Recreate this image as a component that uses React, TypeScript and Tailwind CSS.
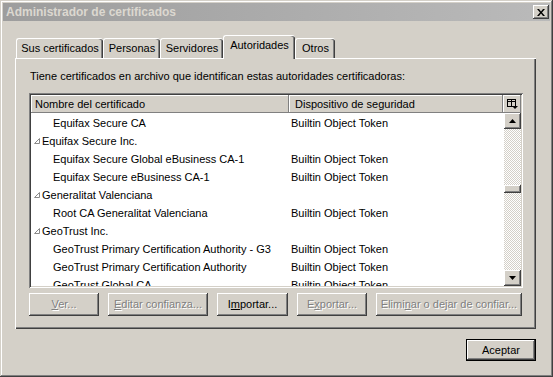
import React from 'react'

const FONT = "font-['Liberation_Sans',Arial,sans-serif]"

const RAISED =
  'shadow-[inset_-1px_-1px_#404040,inset_1px_1px_#ffffff,inset_-2px_-2px_#808080,inset_2px_2px_#d4d0c8]'
const SUNKEN =
  'shadow-[inset_1px_1px_#808080,inset_-1px_-1px_#ffffff,inset_2px_2px_#404040,inset_-2px_-2px_#d4d0c8]'
const THIN_RAISED = 'shadow-[inset_-1px_-1px_#808080,inset_1px_1px_#ffffff]'

type Row = { name: string; device?: string; group?: boolean }

const ROWS: Row[] = [
  { name: 'Equifax Secure CA', device: 'Builtin Object Token' },
  { name: 'Equifax Secure Inc.', group: true },
  { name: 'Equifax Secure Global eBusiness CA-1', device: 'Builtin Object Token' },
  { name: 'Equifax Secure eBusiness CA-1', device: 'Builtin Object Token' },
  { name: 'Generalitat Valenciana', group: true },
  { name: 'Root CA Generalitat Valenciana', device: 'Builtin Object Token' },
  { name: 'GeoTrust Inc.', group: true },
  { name: 'GeoTrust Primary Certification Authority - G3', device: 'Builtin Object Token' },
  { name: 'GeoTrust Primary Certification Authority', device: 'Builtin Object Token' },
  { name: 'GeoTrust Global CA', device: 'Builtin Object Token' },
]

const TABS = [
  { label: 'Sus certificados', w: 'w-[87px]' },
  { label: 'Personas', w: 'w-[57px]' },
  { label: 'Servidores', w: 'w-[63px]' },
  { label: 'Autoridades', w: 'w-[72px]', active: true },
  { label: 'Otros', w: 'w-[40px]' },
]

function Expander() {
  return (
    <svg width="6" height="6" viewBox="0 0 6 6" className="shrink-0">
      <path d="M5.5 0.5 L5.5 5.5 L0.5 5.5 Z" fill="none" stroke="#8a8a8a" strokeWidth="1" />
    </svg>
  )
}

function ColumnPicker() {
  return (
    <svg width="11" height="10" viewBox="0 0 11 10">
      <rect x="0.5" y="0.5" width="8" height="7" fill="none" stroke="#000" />
      <line x1="0.5" y1="2.5" x2="8.5" y2="2.5" stroke="#000" />
      <line x1="4.5" y1="0.5" x2="4.5" y2="7.5" stroke="#000" />
      <path d="M5 7 L11 7 L8 10 Z" fill="#000" />
    </svg>
  )
}

function Arrow({ up }: { up?: boolean }) {
  return (
    <svg width="7" height="4" viewBox="0 0 7 4">
      <path d={up ? 'M0 4 L7 4 L3.5 0 Z' : 'M0 0 L7 0 L3.5 4 Z'} fill="#000" />
    </svg>
  )
}

function Btn({
  children,
  w,
  disabled,
}: {
  children: React.ReactNode
  w: string
  disabled?: boolean
}) {
  return (
    <div
      className={`${w} h-[23px] flex items-center justify-center bg-[#d4d0c8] ${RAISED} ${
        disabled ? 'text-[#808080] [text-shadow:1px_1px_#ffffff]' : 'text-black'
      }`}
    >
      <span className="text-[11px] leading-none">{children}</span>
    </div>
  )
}

export default function App() {
  return (
    <div
      className={`${FONT} w-[553px] h-[377px] bg-[#d4d0c8] flex flex-col p-[3px] select-none shadow-[inset_-1px_-1px_#404040,inset_1px_1px_#d4d0c8,inset_-2px_-2px_#808080,inset_2px_2px_#ffffff]`}
    >
      {/* Title bar (inactive) */}
      <div className="h-[18px] flex items-center justify-between pl-[3px] pr-[1px] bg-gradient-to-r from-[#9d9d9d] to-[#bababa]">
        <span className="text-[12px] font-bold text-[#dcd8d0] leading-none">Administrador de certificados</span>
        <div className={`w-[16px] h-[14px] flex items-center justify-center bg-[#d4d0c8] ${RAISED}`}>
          <svg width="8" height="7" viewBox="0 0 8 7">
            <path d="M0 0 L2 0 L4 2.5 L6 0 L8 0 L5 3.5 L8 7 L6 7 L4 4.5 L2 7 L0 7 L3 3.5 Z" fill="#000" />
          </svg>
        </div>
      </div>

      {/* Tabs */}
      <div className="mt-[14px] ml-[13px] h-[23px] flex items-end">
        {TABS.map((t) =>
          t.active ? (
            <div
              key={t.label}
              className={`${t.w} h-[24px] -mb-[1px] relative z-10 bg-[#d4d0c8] border-l border-t border-white rounded-t-[3px] shadow-[inset_-1px_0_#404040,inset_-2px_0_#808080] flex justify-center pt-[3px]`}
            >
              <span className="text-[11px] leading-[13px]">{t.label}</span>
            </div>
          ) : (
            <div
              key={t.label}
              className={`${t.w} h-[20px] bg-[#d4d0c8] border-l border-t border-white rounded-t-[3px] shadow-[inset_-1px_0_#404040,inset_-2px_0_#808080] flex justify-center pt-[3px]`}
            >
              <span className="text-[11px] leading-[13px]">{t.label}</span>
            </div>
          )
        )}
      </div>

      {/* Tab panel */}
      <div className="ml-[12px] w-[521px] h-[271px] border-l border-t border-white shadow-[inset_-1px_-1px_#404040,inset_-2px_-2px_#808080] flex flex-col pl-[13px]">
        <p className="mt-[11px] pl-[1px] text-[11px] leading-[13px] text-black">
          Tiene certificados en archivo que identifican estas autoridades certificadoras:
        </p>

        {/* Tree list */}
        <div className={`mt-[10px] w-[494px] h-[195px] bg-white p-[2px] flex flex-col ${SUNKEN}`}>
          <div className="h-[18px] flex bg-[#d4d0c8] text-[11px]">
            <div className={`w-[258px] flex items-center pl-[4px] ${THIN_RAISED}`}>Nombre del certificado</div>
            <div className={`w-[214px] flex items-center pl-[6px] ${THIN_RAISED}`}>Dispositivo de seguridad</div>
            <div className={`flex-1 flex items-center justify-center ${THIN_RAISED}`}>
              <ColumnPicker />
            </div>
          </div>
          <div className="flex-1 flex min-h-0">
            <div className="flex-1 overflow-hidden pt-[1px]">
              {ROWS.map((r) => (
                <div key={r.name} className="h-[18px] flex items-center text-[11px] text-black">
                  <div className="w-[258px] flex items-center">
                    {r.group ? (
                      <div className="flex items-center gap-[1px] pl-[3px]">
                        <Expander />
                        <span className="pl-[1px]">{r.name}</span>
                      </div>
                    ) : (
                      <span className="pl-[22px] whitespace-nowrap">{r.name}</span>
                    )}
                  </div>
                  <span className="pl-[2px] whitespace-nowrap">{r.device}</span>
                </div>
              ))}
            </div>
            {/* Scrollbar */}
            <div className="w-[17px] flex flex-col [background:repeating-conic-gradient(#d4d0c8_0_25%,#ffffff_0_50%)_0_0/2px_2px]">
              <div className={`h-[16px] flex items-center justify-center bg-[#d4d0c8] ${RAISED}`}>
                <Arrow up />
              </div>
              <div className="h-[56px]" />
              <div className={`h-[8px] bg-[#d4d0c8] ${RAISED}`} />
              <div className="flex-1" />
              <div className={`h-[16px] flex items-center justify-center bg-[#d4d0c8] ${RAISED}`}>
                <Arrow />
              </div>
            </div>
          </div>
        </div>

        {/* Action buttons */}
        <div className="mt-[5px] flex gap-[9px]">
          <Btn w="w-[70px]" disabled>
            <u>V</u>er...
          </Btn>
          <Btn w="w-[100px]" disabled>
            <u>E</u>ditar confianza...
          </Btn>
          <Btn w="w-[71px]">
            I<u>m</u>portar...
          </Btn>
          <Btn w="w-[70px]" disabled>
            E<u>x</u>portar...
          </Btn>
          <Btn w="w-[146px]" disabled>
            Elimi<u>n</u>ar o dejar de confiar...
          </Btn>
        </div>
      </div>

      {/* Footer */}
      <div className="mt-[10px] flex justify-end pr-[14px]">
        <div className="w-[70px] h-[22px] border border-black flex">
          <div className={`flex-1 flex items-center justify-center bg-[#d4d0c8] ${RAISED}`}>
            <span className="text-[11px] leading-none">Aceptar</span>
          </div>
        </div>
      </div>
    </div>
  )
}
